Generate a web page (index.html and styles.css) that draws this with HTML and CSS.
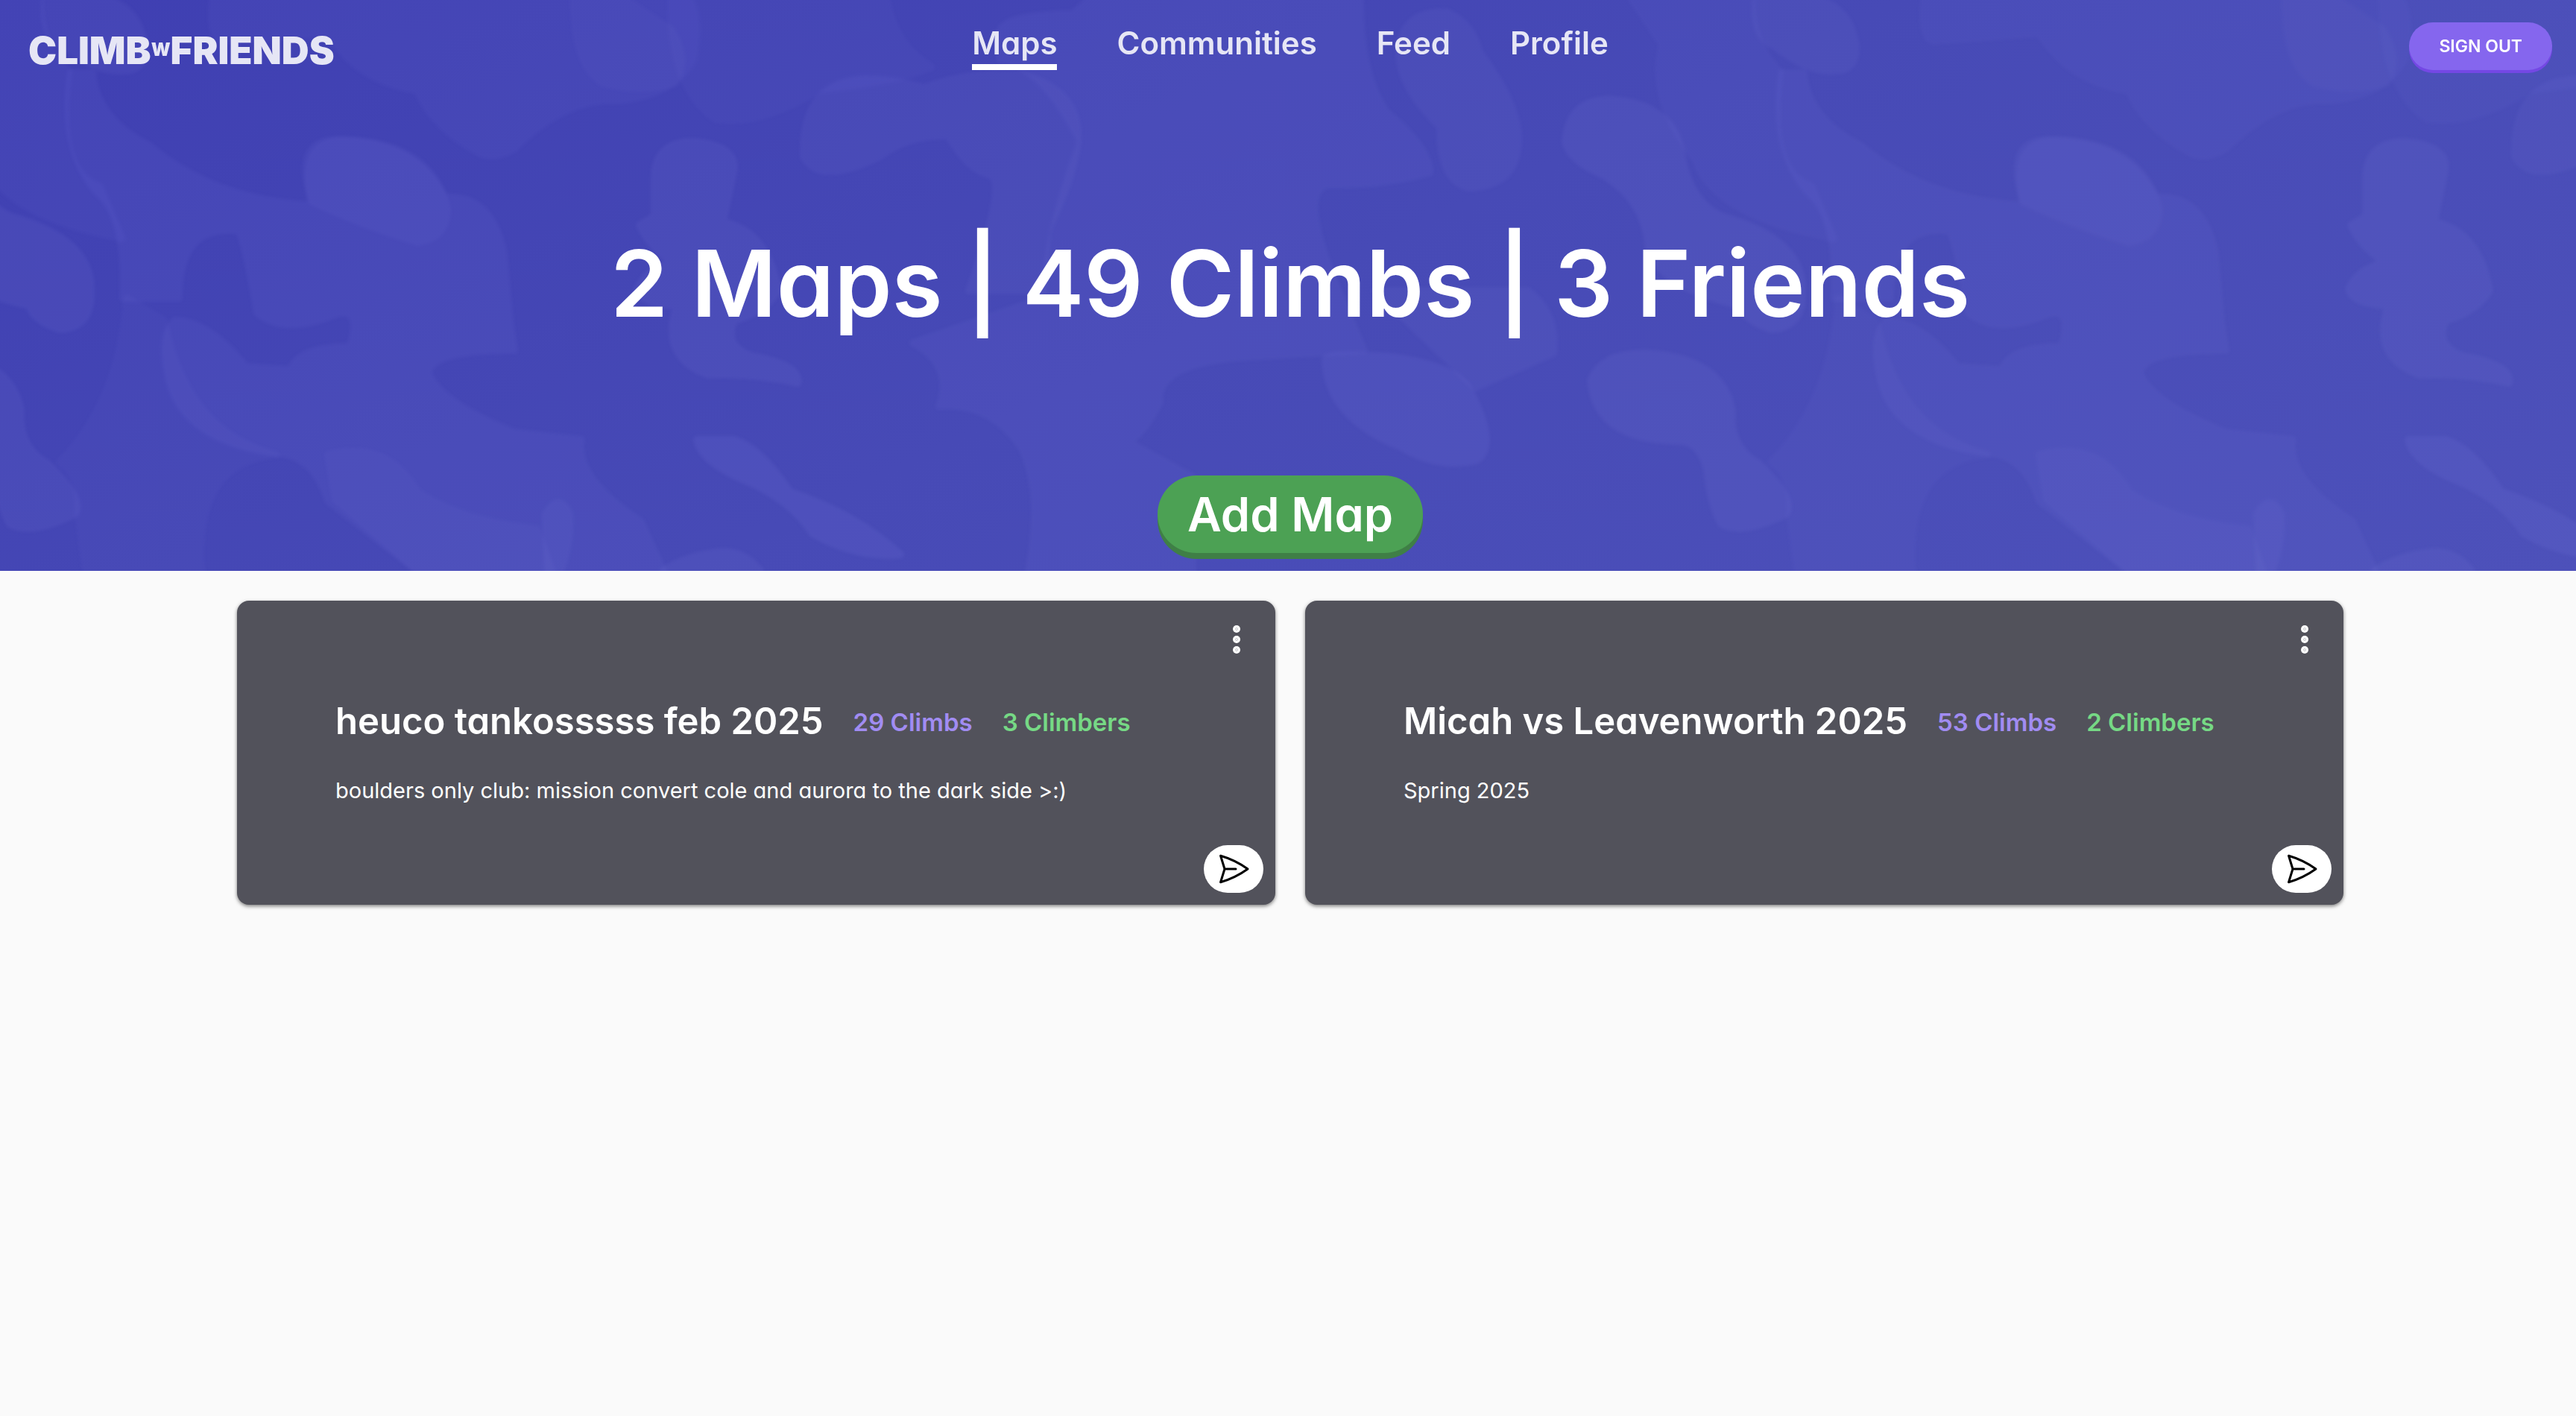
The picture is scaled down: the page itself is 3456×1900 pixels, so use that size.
FILE: index.html
```html
<!DOCTYPE html>
<html lang="en">
<head>
<meta charset="utf-8">
<title>Climb w Friends</title>
<link rel="stylesheet" href="styles.css">
</head>
<body>
<div class="hero">
  <svg class="hero-art" viewBox="0 0 3456 766" preserveAspectRatio="xMinYMin slice" aria-hidden="true">
    <defs>
      <g id="camo" fill="#8c8ce6" stroke="#8c8ce6" stroke-width="10" stroke-linejoin="round">
        <path opacity=".08" d="M60 0Q55 50 85 62Q130 98 165 95Q196 96 194 60Q185 10 145 0Z"/>
        <path opacity=".07" d="M95 98L124 98Q130 160 200 195Q290 270 420 275Q390 185 455 188Q560 190 596 265Q660 260 676 340L684 430L690 470Q580 470 575 500Q590 540 690 580L780 590Q770 640 860 700L890 766H560L440 672Q420 610 370 608Q240 590 225 500Q215 450 235 430Q280 430 330 492L390 496Q400 465 470 465Q485 410 450 422Q380 450 345 420Q330 330 320 310Q240 300 240 400L165 400Q170 290 130 258Q80 200 95 98Z"/>
        <path opacity=".06" d="M418 270Q400 190 460 188Q580 190 600 280Q600 320 560 325Q480 300 418 270Z"/>
        <path opacity=".06" d="M285 0Q280 55 300 55L440 45Q480 110 560 122Q580 170 640 204Q660 216 690 200Q760 130 830 135Q900 130 930 80Q940 20 925 0Z"/>
        <path opacity=".05" d="M770 0Q770 90 810 112Q860 125 905 112Q925 80 900 40L840 0Z"/>
        <path opacity=".05" d="M170 400Q160 540 80 620Q110 640 105 690L115 766H270Q260 620 370 610Q250 580 220 430Z"/>
        <path opacity=".05" d="M440 610Q520 590 560 660Q620 700 720 710L740 766H560L450 670Z"/>
        <path opacity=".08" d="M732 690Q750 660 764 690Q766 730 752 766H735Z"/>
        <path opacity=".09" d="M878 240Q878 190 930 190Q990 195 984 230L970 298Q1030 310 1044 390Q1025 420 985 430Q970 465 1010 478Q1075 490 1070 514Q1010 500 950 503Q885 480 908 410Q860 408 855 388Q865 362 903 352Q870 330 858 302L878 290Z"/>
        <path opacity=".05" d="M900 0H1190Q1200 60 1250 90Q1200 110 1100 120Q1020 170 960 160Q900 120 900 0Z"/>
        <path opacity=".08" d="M1078 210Q1075 110 1160 106Q1200 106 1240 118Q1300 95 1370 100Q1450 120 1446 190Q1440 240 1405 310L1400 390H1300Q1350 250 1330 235Q1300 230 1272 182Q1220 180 1180 210Q1100 250 1078 210Z"/>
        <path opacity=".07" d="M1342 40Q1350 20 1440 18L1460 0H1825Q1825 100 1860 150Q1920 200 1918 232Q1850 250 1780 248Q1740 260 1800 400L1830 470L1660 480Q1550 490 1556 540Q1530 590 1512 592L1600 640V766H1380Q1400 660 1370 600Q1330 540 1260 545Q1280 490 1225 460L1400 400Q1405 310 1450 190Q1400 90 1342 80Z"/>
        <path opacity=".08" d="M1878 60Q1885 15 1940 16Q1975 30 1985 70Q2045 150 2036 200Q2030 250 1970 252Q1930 240 1932 170Q1870 110 1878 60Z"/>
        <path opacity=".09" d="M2100 190Q2105 130 2165 134Q2240 140 2255 200Q2265 270 2310 290Q2420 320 2418 390Q2420 440 2376 442Q2340 430 2335 410Q2240 390 2212 340Q2210 270 2150 235Q2105 215 2100 190Z"/>
        <path opacity=".06" d="M2190 0H2350Q2350 60 2388 96Q2370 230 2430 250L2460 320Q2300 290 2275 215Q2210 130 2230 60Z"/>
        <path opacity=".08" d="M1845 390L1980 520L2084 474Q2090 420 2050 390Z"/>
        <path opacity=".1" d="M1778 482Q1780 474 1860 478Q1960 490 1975 530Q2010 600 1980 618Q1930 630 1880 600Q1780 560 1778 482Z"/>
        <path opacity=".09" d="M2134 510Q2150 472 2210 474Q2310 480 2324 550Q2320 600 2360 622Q2410 670 2396 690Q2340 718 2310 704Q2295 680 2290 630Q2280 590 2250 592Q2140 590 2134 510Z"/>
        <path opacity=".11" d="M935 590L985 590Q1020 600 1060 660Q1150 690 1208 744Q1150 750 1090 716Q1060 670 1000 645Q940 620 935 590Z"/>
        <path opacity=".09" d="M890 766Q920 745 970 740Q1000 740 1020 766Z"/>
      </g>
    </defs>
    <g class="camo-layer">
      <use href="#camo" x="-2296"/>
      <use href="#camo"/>
      <use href="#camo" x="2296"/>
    </g>
  </svg>
  <header class="topbar">
    <a class="logo" href="#">CLIMB<span class="logo-w">W</span>FRIENDS</a>
    <nav class="nav">
      <a class="nav-link active" href="#">Maps</a>
      <a class="nav-link" href="#">Communities</a>
      <a class="nav-link" href="#">Feed</a>
      <a class="nav-link" href="#">Profile</a>
    </nav>
    <button class="sign-out" type="button">SIGN OUT</button>
  </header>
  <h1 class="stats">2 Maps | 49 Climbs | 3 Friends</h1>
  <button class="add-map" type="button">Add Map</button>
</div>
<main class="maps">
  <article class="card">
    <button class="menu" type="button" aria-label="Map options">
      <svg viewBox="0 0 56 56" fill="#fff"><circle cx="28" cy="14" r="5"/><circle cx="28" cy="28" r="5"/><circle cx="28" cy="42" r="5"/><g fill="none" stroke="#c8c8cc"><circle cx="28" cy="14" r="1.5"/><circle cx="28" cy="28" r="1.5"/><circle cx="28" cy="42" r="1.5"/></g></svg>
    </button>
    <div class="card-body">
      <div class="card-head">
        <h2 class="title">heuco tankosssss feb 2025</h2>
        <span class="climbs">29 Climbs</span>
        <span class="climbers">3 Climbers</span>
      </div>
      <p class="desc">boulders only club: mission convert cole and aurora to the dark side &gt;:)</p>
    </div>
    <button class="send" type="button" aria-label="Share map">
      <svg viewBox="0 0 24 24" fill="none" stroke="#000" stroke-width="1.5" stroke-linecap="round" stroke-linejoin="round"><path d="M6 12 3.269 3.125A59.769 59.769 0 0 1 21.485 12 59.768 59.768 0 0 1 3.27 20.875L5.999 12Zm0 0h7.5"/></svg>
    </button>
  </article>
  <article class="card">
    <button class="menu" type="button" aria-label="Map options">
      <svg viewBox="0 0 56 56" fill="#fff"><circle cx="28" cy="14" r="5"/><circle cx="28" cy="28" r="5"/><circle cx="28" cy="42" r="5"/><g fill="none" stroke="#c8c8cc"><circle cx="28" cy="14" r="1.5"/><circle cx="28" cy="28" r="1.5"/><circle cx="28" cy="42" r="1.5"/></g></svg>
    </button>
    <div class="card-body">
      <div class="card-head">
        <h2 class="title">Micah vs Leavenworth 2025</h2>
        <span class="climbs">53 Climbs</span>
        <span class="climbers">2 Climbers</span>
      </div>
      <p class="desc">Spring 2025</p>
    </div>
    <button class="send" type="button" aria-label="Share map">
      <svg viewBox="0 0 24 24" fill="none" stroke="#000" stroke-width="1.5" stroke-linecap="round" stroke-linejoin="round"><path d="M6 12 3.269 3.125A59.769 59.769 0 0 1 21.485 12 59.768 59.768 0 0 1 3.27 20.875L5.999 12Zm0 0h7.5"/></svg>
    </button>
  </article>
</main>
</body>
</html>
```
FILE: styles.css
```css
* { box-sizing: border-box; }
body {
  margin: 0;
  background: #fafafa;
  font-family: Inter, "Liberation Sans", sans-serif;
  font-feature-settings: "cv11";
  color: #fff;
}
button {
  border: 0;
  padding: 0;
  font: inherit;
  font-feature-settings: inherit;
  color: inherit;
  cursor: pointer;
}
a { color: inherit; text-decoration: none; }
h1, h2, p { margin: 0; }

.hero {
  position: relative;
  display: flex;
  flex-direction: column;
  align-items: center;
  padding: 30px 32px 24px 38px;
  background: linear-gradient(155deg, #3f3fb2, #474ab6 50%, #4d51ba);
}
.hero-art {
  position: absolute;
  inset: 0;
  width: 100%;
  height: 100%;
}
.camo-layer { filter: blur(2px); }
.topbar, .stats, .add-map { position: relative; }

.topbar {
  align-self: stretch;
  display: grid;
  grid-template-columns: 1fr auto 1fr;
  align-items: start;
}
.logo {
  font-weight: 900;
  font-size: 51px;
  line-height: 76px;
  color: #e6e6f5;
}
.logo-w {
  font-size: 24px;
  line-height: 24px;
  vertical-align: 11px;
}
.nav {
  display: flex;
  gap: 80px;
}
.nav-link {
  font-size: 42px;
  line-height: 56px;
  font-weight: 600;
  color: #e6e6f5;
}
.nav-link.active { border-bottom: 8px solid #fff; }
.sign-out {
  justify-self: end;
  height: 64px;
  padding: 0 40px;
  border-radius: 32px;
  background: #8566ee;
  box-shadow: 0 4px 0 #7448e4;
  font-size: 23px;
  font-weight: 600;
}
.stats {
  margin-top: 184px;
  font-size: 124px;
  line-height: 180px;
  font-weight: 600;
}
.add-map {
  margin-top: 168px;
  height: 104px;
  padding: 0 40px;
  border-radius: 52px;
  background: #4ca154;
  box-shadow: 0 8px 0 #3f7f46;
  font-size: 63px;
  font-weight: 600;
}

.maps {
  display: grid;
  grid-template-columns: 1fr 1fr;
  gap: 40px;
  padding: 40px 312px 40px 318px;
}
.card {
  display: flex;
  flex-direction: column;
  align-items: flex-end;
  padding: 24px 16px 16px;
  border-radius: 16px;
  background: #52525b;
  box-shadow: 0 2px 5px rgba(0, 0, 0, 0.5);
}
.menu {
  width: 56px;
  height: 56px;
  margin-right: 8px;
  background: none;
}
.menu svg { display: block; width: 56px; height: 56px; }
.card-body {
  align-self: stretch;
  margin: 46px 0 52px;
  padding: 0 116px;
}
.card-head {
  display: flex;
  align-items: center;
  gap: 40px;
}
.title {
  font-size: 49px;
  line-height: 72px;
  font-weight: 600;
}
.climbs, .climbers {
  padding-top: 2px;
  font-size: 33px;
  line-height: 48px;
  font-weight: 600;
}
.climbs { color: #a18cf2; }
.climbers { color: #76d985; }
.desc {
  margin-top: 36px;
  font-size: 29px;
  line-height: 42px;
}
.send {
  display: grid;
  place-items: center;
  width: 80px;
  height: 64px;
  border-radius: 32px;
  background: #fff;
}
.send svg { width: 48px; height: 48px; }
```
